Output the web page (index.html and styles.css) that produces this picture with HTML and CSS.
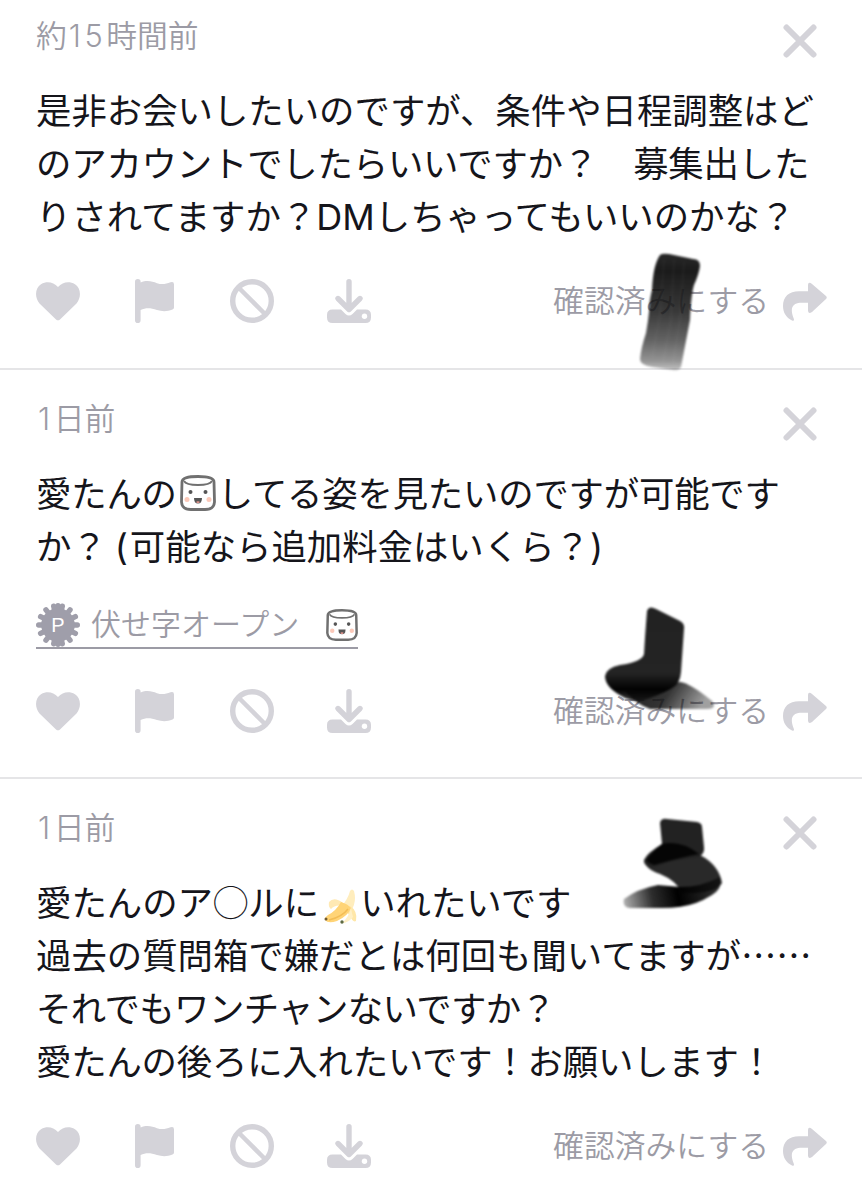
FILE: index.html
```html
<!DOCTYPE html>
<html lang="ja">
<head>
	<meta charset="utf-8">
	<meta name="viewport" content="width=device-width, initial-scale=1">
	<title>質問箱</title>
	<link rel="stylesheet" href="styles.css">
</head>
<body>
	<!-- shared icons -->
	<svg class="defs" width="0" height="0">
		<symbol id="close" viewBox="0 0 34 34">
			<path d="M3.5 3.5l27 27M30.500 3.500l-27 27" fill="none" stroke="currentColor" stroke-width="6" stroke-linecap="round"/>
		</symbol>
		<symbol id="heart" viewBox="0 0 44 44">
			<path d="M20 40.400L3.500 24.500C-2 18-.5 8.500 5 5.300C11 1.800 17.500 3.200 22 8C26.500 3.200 33 1.800 39 5.300C44.500 8.500 46 18 40.500 24.500L24 40.400Q22 42.200 20 40.400z" fill="currentColor"/>
		</symbol>
		<symbol id="flag" viewBox="0 0 44 44">
			<path d="M2 2.800a2.800 2.800 0 0 1 5.600 0V3.500C14 .8 19 2.300 24 4.200C29 5.900 33 5 37.500 3.300Q41 2.200 41 5.500V28.500Q41 30 39.500 30.500C34 32.700 29 32.500 24 31C17.500 28.800 13 28.500 7.600 31V41.200a2.800 2.800 0 0 1-5.600 0z" fill="currentColor"/>
		</symbol>
		<symbol id="ban" viewBox="0 0 44 44">
			<path d="M9 9l26 26" stroke="currentColor" stroke-width="4.500"/>
			<circle cx="22" cy="22" r="19.300" fill="none" stroke="currentColor" stroke-width="5.400"/>
		</symbol>
		<symbol id="download" viewBox="0 0 44 44">
			<path d="M5.500 30.500H14L18.500 35Q22 38 25.500 35L30 30.500H38.500Q44 30.500 44 36V38.500Q44 44 38.500 44H5.500Q0 44 0 38.500V36Q0 30.500 5.500 30.500z" fill="currentColor"/>
			<path d="M22 2.700V30M11 19.500L22 30.500L33 19.500" fill="none" stroke="currentColor" stroke-width="5.400" stroke-linecap="round" stroke-linejoin="round"/>
			<circle cx="37.500" cy="37.300" r="2.700" fill="#fff"/>
		</symbol>
		<symbol id="share" viewBox="0 0 44 40">
			<path d="M25 3Q25 .5 27 .8Q28 1 29 2L43 14Q44.500 15.500 43 17L29 30Q25 32.500 25 28.500V20.800H17C10 21.200 6.500 26 10.500 36Q12 39.500 9 38.500C3 35.500 0 30.500 0 24C0 14.500 6 9.200 16 9.200H25z" fill="currentColor"/>
		</symbol>
		<symbol id="marshmallow" viewBox="0 0 36 36">
			<path d="M2 7Q2 1.500 18 1.500T34 7L34.500 27Q34 34.500 25 34.500H11Q2 34.500 1.500 27z" fill="#fff" stroke="#707070" stroke-width="2.800"/>
			<path d="M4 6Q6 10 18 10T32 6" fill="none" stroke="#707070" stroke-width="1.800"/>
			<circle cx="10.500" cy="17" r="2" fill="#555"/>
			<circle cx="25.500" cy="17" r="2" fill="#555"/>
			<circle cx="7" cy="24.500" r="2.500" fill="#fbc9b9"/>
			<circle cx="29" cy="24.500" r="2.500" fill="#fbc9b9"/>
			<path d="M14 23h8q0 5.500-4 5.500T14 23z" fill="#555"/>
			<path d="M16 27q2-1.500 4 0-2 2-4 0z" fill="#ef9a91"/>
		</symbol>
	</svg>

	<div class="message first">
		<div class="head">
			<span class="time">約<span class="num">15</span>時間前</span>
			<svg class="close"><use href="#close"/></svg>
		</div>
		<p class="text">
			<span class="line">是非お会いしたいのですが、条件や日程調整はど</span>
			<span class="line tight">のアカウントでしたらいいですか？　募集出した</span>
			<span class="line">りされてますか？<span class="latin">DM</span>しちゃってもいいのかな？</span>
		</p>
		<div class="actions">
			<svg class="icon"><use href="#heart"/></svg>
			<svg class="icon"><use href="#flag"/></svg>
			<svg class="icon"><use href="#ban"/></svg>
			<svg class="icon"><use href="#download"/></svg>
			<span class="confirm">確認済みにする</span>
			<svg class="share"><use href="#share"/></svg>
		</div>
		<svg class="scribble one" viewBox="0 0 70 126">
			<defs>
				<linearGradient id="ink1" x1="0" y1="0" x2="0" y2="1">
					<stop offset="0" stop-color="#111" stop-opacity=".9"/>
					<stop offset=".15" stop-color="#111" stop-opacity=".96"/>
					<stop offset=".5" stop-color="#111" stop-opacity=".83"/>
					<stop offset=".75" stop-color="#111" stop-opacity=".65"/>
					<stop offset=".92" stop-color="#111" stop-opacity=".45"/>
					<stop offset="1" stop-color="#111" stop-opacity=".25"/>
				</linearGradient>
			</defs>
			<path d="M25 5Q27 3 34 4L58 9Q65 9 65 16Q64 24 59 35Q56 45 55 70L46 117Q44 121 38 120L17 117Q5 115 5 109Q6 98 11 83Q13 72 14 62Q14 52 17 40Q18 15 25 5z" fill="url(#ink1)"/>
			<path d="M29 10L25 65L17 108M39 10L36 70L28 112M49 12L45 70L38 113" fill="none" stroke="#fff" stroke-width="2" opacity=".03"/>
		</svg>
	</div>

	<div class="message">
		<div class="head">
			<span class="time"><span class="num">1</span>日前</span>
			<svg class="close"><use href="#close"/></svg>
		</div>
		<p class="text">
			<span class="line tight">愛たんの<svg class="emoji"><use href="#marshmallow"/></svg>してる姿を見たいのですが可能です</span>
			<span class="line">か？ <span class="latin paren">(</span>可能なら追加料金はいくら？<span class="latin">)</span></span>
		</p>
		<div class="open">
			<svg class="badge" viewBox="-22 -22 44 44">
				<g stroke="#9f9eaa" stroke-width="5.400" stroke-linecap="round">
					<path id="ray" d="M0-19.300V19.300"/>
					<use href="#ray" transform="rotate(12.860)"/>
					<use href="#ray" transform="rotate(38.570)"/>
					<use href="#ray" transform="rotate(64.290)"/>
					<use href="#ray" transform="rotate(90)"/>
					<use href="#ray" transform="rotate(115.710)"/>
					<use href="#ray" transform="rotate(141.430)"/>
					<use href="#ray" transform="rotate(167.140)"/>
				</g>
				<circle r="16.800" fill="#9f9eaa"/>
				<text y="7" text-anchor="middle">P</text>
			</svg>
			<span class="label">伏せ字オープン</span>
			<svg class="small-emoji"><use href="#marshmallow"/></svg>
		</div>
		<div class="actions">
			<svg class="icon"><use href="#heart"/></svg>
			<svg class="icon"><use href="#flag"/></svg>
			<svg class="icon"><use href="#ban"/></svg>
			<svg class="icon"><use href="#download"/></svg>
			<span class="confirm">確認済みにする</span>
			<svg class="share"><use href="#share"/></svg>
		</div>
		<svg class="scribble two" viewBox="0 0 120 110">
			<defs>
				<linearGradient id="ink2" x1="0" y1="0" x2="1" y2=".2">
					<stop offset="0" stop-color="#111" stop-opacity=".95"/>
					<stop offset=".55" stop-color="#111" stop-opacity=".85"/>
					<stop offset="1" stop-color="#111" stop-opacity=".4"/>
				</linearGradient>
				<linearGradient id="ink2b" x1="0" y1="0" x2="0" y2="1">
					<stop offset="0" stop-color="#222"/>
					<stop offset=".7" stop-color="#242424"/>
					<stop offset=".88" stop-color="#020202"/>
					<stop offset="1" stop-color="#111" stop-opacity=".8"/>
				</linearGradient>
			</defs>
			<path d="M25 88Q55 82 80 78Q90 79 112 97Q118 105 106 105H50Q38 101 25 88z" fill="url(#ink2)"/>
			<path d="M47 7Q49 1 56 5L80 17Q85 20 84 25L81 68Q80 78 75 82Q67 88 50 94Q38 100 25 94Q5 84 5 72Q6 64 20 61Q42 58 44 50Q45 32 47 7z" fill="url(#ink2b)"/>
		</svg>
	</div>

	<div class="message last">
		<div class="head">
			<span class="time"><span class="num">1</span>日前</span>
			<svg class="close"><use href="#close"/></svg>
		</div>
		<p class="text">
			<span class="line">愛たんのア◯ルに<svg class="banana" viewBox="0 0 34 36">
				<path d="M17 18Q24 10 26 2Q28-1 30 2Q33 13 27 22z" fill="#ffedbd"/>
				<path d="M19 14Q10 7 5 13Q4 18 7 20Q11 15 20 17z" fill="#ffe9b4"/>
				<path d="M26 17Q34 22 32 32Q29 34 26 27L22 22z" fill="#ffe7a8"/>
				<path d="M17 13Q24 15 27 19Q24 27 13 32Q4 35 1 31Q0 29 4 26Q12 22 17 13z" fill="#ffd477"/>
				<path d="M27 19Q25 28 18 34Q24 34 29 28Q28 25 27 19z" fill="#fff0c6"/>
				<path d="M24 20Q18 28 5 31" fill="none" stroke="#f3bd55" stroke-width="1.500"/>
				<circle cx="2" cy="30" r="1.500" fill="#725c31"/>
				<circle cx="18" cy="33" r="1.700" fill="#5d6a43"/>
			</svg>いれたいです</span>
			<span class="line">過去の質問箱で嫌だとは何回も聞いてますが……</span>
			<span class="line tighter">それでもワンチャンないですか？</span>
			<span class="line tight">愛たんの後ろに入れたいです！お願いします！</span>
		</p>
		<div class="actions">
			<svg class="icon"><use href="#heart"/></svg>
			<svg class="icon"><use href="#flag"/></svg>
			<svg class="icon"><use href="#ban"/></svg>
			<svg class="icon"><use href="#download"/></svg>
			<span class="confirm">確認済みにする</span>
			<svg class="share"><use href="#share"/></svg>
		</div>
		<svg class="scribble three" viewBox="0 0 106 100">
			<defs>
				<linearGradient id="ink3" gradientUnits="userSpaceOnUse" x1="2" y1="92" x2="102" y2="72">
					<stop offset="0" stop-color="#111" stop-opacity=".3"/>
					<stop offset=".3" stop-color="#111" stop-opacity=".88"/>
					<stop offset=".55" stop-color="#000"/>
					<stop offset="1" stop-color="#111" stop-opacity=".85"/>
				</linearGradient>
			</defs>
			<path d="M25 48L80 44Q99 54 102 72Q96 83 62 82Q57 70 40 63Q25 58 24 49z" fill="#292929"/>
			<path d="M4 88Q17 78 38 74L60 76Q82 76 100 66Q103 78 92 84Q84 89 76 92Q62 97 42 97H10Q2 96 4 88z" fill="url(#ink3)"/>
			<path d="M40 12Q41 7 47 8L77 11Q82 12 82 16L84 36Q85 42 79 46Q68 47 52 50L34 56Q23 56 24 49Q27 42 42 33z" fill="#222"/>
			<path d="M42 33Q61 29 79 43Q62 46 34 54Q25 51 27 48Q32 41 42 33z" fill="#050505"/>
		</svg>
	</div>
</body>
</html>
```
FILE: styles.css
```css
* {
	box-sizing: border-box;
}

body {
	margin: 0;
	height: 1200px;
	overflow: hidden;
	background: #fff;
	color: #15151b;
	font-family: "Noto Sans CJK JP", sans-serif;
}

.defs {
	position: absolute;
}

.message {
	position: relative;
	padding: 24px 36px 44px;
	border-bottom: 2px solid #e5e5e7;
}

.message.first {
	padding-top: 11px;
	padding-bottom: 45px;
}

.message.last {
	border-bottom: 0;
}

.head {
	display: flex;
	justify-content: space-between;
	align-items: center;
	height: 48px;
}

.time,
.label,
.confirm {
	color: #9c9ba5;
	font-size: 30.8px;
	font-weight: 350;
	line-height: 44px;
	white-space: nowrap;
}

.time {
	margin-top: -1px;
}

.label {
	font-size: 30px;
	margin-top: -6px;
}

.num {
	margin-left: 2px;
	font-family: Inter, sans-serif;
	font-weight: 300;
	letter-spacing: 3.5px;
}

.latin {
	font-family: Inter, sans-serif;
	font-size: 36px;
}

.paren {
	margin-right: 2px;
}

.close {
	width: 34px;
	height: 34px;
	margin: 11px 9px 0 0;
	color: #d4d3d9;
}

.text {
	margin: 23px 0 38px;
	font-size: 35.4px;
	line-height: 53px;
}

.line {
	display: block;
	height: 53px;
	white-space: nowrap;
}

.tight {
	letter-spacing: -.2px;
}

.tighter {
	letter-spacing: -.6px;
}

.emoji {
	width: 36px;
	height: 36px;
	margin: 0 2px 0 3px;
	vertical-align: -4px;
}

.banana {
	width: 34px;
	height: 36px;
	margin: 0 2px 0 5px;
	vertical-align: -9px;
}

.open {
	display: flex;
	align-items: center;
	width: 322px;
	height: 46px;
	margin: -6px 0 40px;
	border-bottom: 2px solid #9c9ba5;
}

.badge {
	width: 44px;
	height: 44px;
	margin-right: 11px;
}

.badge text {
	fill: #fff;
	font-family: "Liberation Sans", sans-serif;
	font-size: 20px;
}

.small-emoji {
	width: 32px;
	height: 32px;
	margin-left: auto;
}

.actions {
	display: flex;
	align-items: center;
	height: 44px;
	color: #d4d3d9;
}

.icon {
	width: 44px;
	height: 44px;
	margin-right: 53px;
}

.confirm {
	margin: -4px 0 0 auto;
}

.share {
	width: 44px;
	height: 40px;
	margin: 1px -1px 0 14px;
}

/* brush strokes over the messages */
.scribble {
	position: absolute;
	filter: blur(1px);
}

.one {
	left: 635px;
	top: 250px;
	width: 70px;
	height: 126px;
}

.two {
	left: 600px;
	top: 234px;
	width: 120px;
	height: 110px;
}

.three {
	left: 620px;
	top: 32px;
	width: 106px;
	height: 100px;
}
```
